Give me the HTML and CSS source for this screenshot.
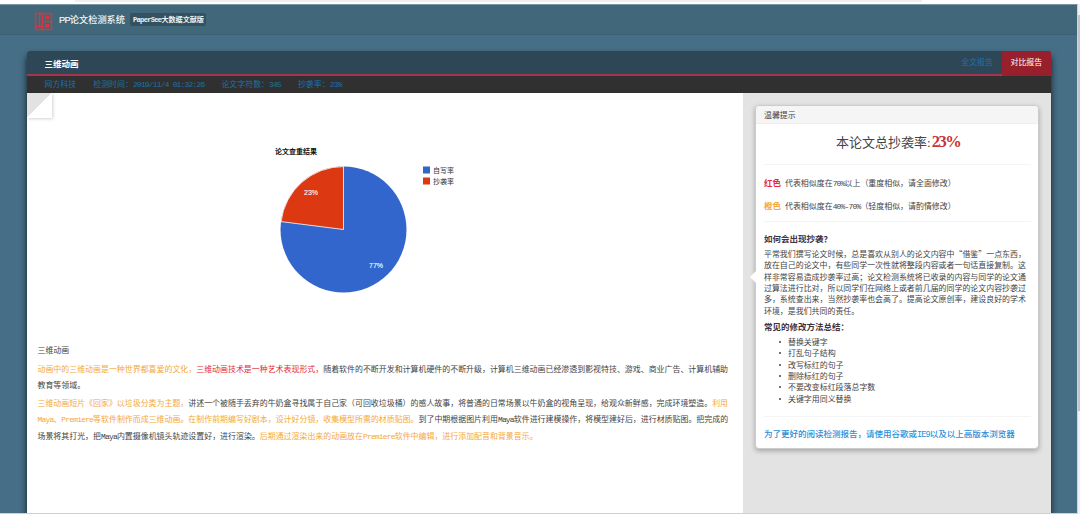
FILE: index.html
```
<!DOCTYPE html>
<html lang="zh-CN">
<head>
<meta charset="utf-8">
<title>PP论文检测系统</title>
<link rel="stylesheet" href="styles.css">
</head>
<body>
<div class="browser-strip"><div class="strip-fill"></div></div>
<div class="window">
<div class="viewport">
  <header class="site-header">
    <svg class="logo" viewBox="0 0 17 17"><path d="M.5 .5H16.500V16.500H.5ZM4.500 .5V13.500M.5 13.500H7.500M7.500 .5V16.500M7.500 8.500H16.500M11 3.500H13.500V5.500H11ZM11 11.500H13.500V13.500H11Z"/></svg>
    <span class="site-name"><span class="pp">PP</span>论文检测系统</span>
    <span class="edition"><span class="ln">PaperSee</span>大数据文献版</span>
  </header>
  <div class="report">
    <div class="report-head">
      <h1 class="report-title">三维动画</h1>
      <nav class="tabs"><a class="tab">全文报告</a><a class="tab active">对比报告</a></nav>
    </div>
    <div class="meta">
      <span>网方科技</span>
      <span>检测时间：<span class="ln">2019/11/4 01:32:26</span></span>
      <span>论文字符数：<span class="ln">345</span></span>
      <span>抄袭率：<span class="ln">23%</span></span>
    </div>
    <div class="columns">
      <main class="paper">
        <div class="fold"></div>
        <svg class="chart" viewBox="0 0 210 160">
          <text class="chart-title" x="15" y="14.300" textLength="42">论文查重结果</text>
          <circle cx="83.500" cy="89.500" r="63" fill="#3366cc"/>
          <path d="M83.500 89.500L21 81.600A63 63 0 0 1 83.500 26.500Z" fill="#dc3912" stroke="#fff" stroke-width=".8"/>
          <text class="slice" x="44" y="55.300" textLength="14">23%</text>
          <text class="slice" x="109" y="128.300" textLength="14">77%</text>
          <rect x="163" y="26.500" width="7" height="7" fill="#3366cc"/>
          <rect x="163" y="37.500" width="7" height="7" fill="#dc3912"/>
          <text class="legend" x="173" y="32.800" textLength="21">自写率</text>
          <text class="legend" x="173" y="43.800" textLength="21">抄袭率</text>
        </svg>
        <div class="article">
          <p>三维动画</p>
          <p><span class="orange">动画中的三维动画是一种世界都喜爱的文化，</span><span class="red">三维动画技术是一种艺术表现形式，</span>随着软件的不断开发和计算机硬件的不断升级，计算机三维动画已经渗透到影视特技、游戏、商业广告、计算机辅助<br>教育等领域。</p>
          <p><span class="orange">三维动画短片《回家》以垃圾分类为主题，</span>讲述一个被随手丢弃的牛奶盒寻找属于自己家（可回收垃圾桶）的感人故事，将普通的日常场景以牛奶盒的视角呈现，给观众新鲜感，完成环境塑造。<span class="orange">利用<br><span class="ln">Maya</span>、<span class="ln">Premiere</span>等软件制作而成三维动画。在制作前期编写好剧本，设计好分镜，收集模型所需的材质贴图。</span>到了中期根据图片利用<span class="ln">Maya</span>软件进行建模操作，将模型建好后，进行材质贴图。把完成的<br>场景将其打光，把<span class="ln">Maya</span>内置摄像机镜头轨迹设置好，进行渲染。<span class="orange">后期通过渲染出来的动画放在<span class="ln">Premiere</span>软件中编辑，进行添加配音和背景音乐。</span></p>
        </div>
      </main>
      <aside class="side">
        <section class="card">
          <div class="card-head">温馨提示</div>
          <div class="card-body">
            <div class="total">本论文总抄袭率:<strong>23%</strong></div>
            <div class="levels">
              <div class="level"><b class="red">红色</b><span>代表相似度在<span class="ln">70%</span>以上（重度相似，请全面修改）</span></div>
              <div class="level"><b class="orange">橙色</b><span>代表相似度在<span class="ln">40%-70%</span>（轻度相似，请酌情修改）</span></div>
            </div>
            <h2>如何会出现抄袭？</h2>
            <p class="explain">平常我们撰写论文时候，总是喜欢从别人的论文内容中“借鉴”一点东西，<br>放在自己的论文中，有些同学一次性就将整段内容或者一句话直接复制。这<br>样非常容易造成抄袭率过高；论文检测系统将已收录的内容与同学的论文通<br>过算法进行比对，所以同学们在网络上或者前几届的同学的论文内容抄袭过<br>多，系统查出来，当然抄袭率也会高了。提高论文原创率，建设良好的学术<br>环境，是我们共同的责任。</p>
            <h2 class="methods">常见的修改方法总结：</h2>
            <ul>
              <li>替换关键字</li><li>打乱句子结构</li><li>改写标红的句子</li><li>删除标红的句子</li><li>不要改变标红段落总字数</li><li>关键字用同义替换</li>
            </ul>
            <div class="browser-tip">为了更好的阅读检测报告，请使用谷歌或<span class="ln">IE9</span>以及以上高版本浏览器</div>
          </div>
        </section>
      </aside>
    </div>
  </div>
</div>
<div class="scrollbar"><div class="thumb"></div></div>
</div>
</body>
</html>
```

FILE: styles.css
```
* { box-sizing: border-box; }
body { margin: 0; height: 515px; overflow: hidden; background: #fff; color: #444; font: 7.94px/16px "Noto Sans CJK SC", sans-serif; text-spacing-trim: space-all; white-space: nowrap; }
h1, h2, p, ul { margin: 0; padding: 0; font-size: inherit; }
.ln { font-family: "Liberation Mono", monospace; letter-spacing: -0.1em; }
.red { color: #e5293b; }
.orange { color: #f5a93a; }
.browser-strip { height: 4px; padding-left: 75px; }
.strip-fill { width: 847px; height: 2px; background: #efefef; }
.window { display: flex; height: 510px; }
.viewport { height: 510px; width: 1078px; background: #466e86; border-top: 1px solid #7c98a5; border-right: 1px solid #cfd6da; border-bottom: 1px solid #d0d0d0; overflow: hidden; }
.scrollbar { width: 2px; padding-top: 11px; background: #f1f1f1; }
.thumb { height: 396px; background: #c4c4c4; }
.site-header { height: 30px; display: flex; align-items: center; padding-left: 35px; background: #41677a; border-bottom: 1px solid #3c6173; }
.logo { width: 17px; height: 17px; margin-top: 3px; fill: none; stroke: #d0393d; stroke-width: 1.4; overflow: visible; }
.site-name { margin-left: 7px; font-size: 9.2px; font-weight: 500; color: #f2f6f8; width: 66px; }
.pp { font-family: "Liberation Sans", sans-serif; letter-spacing: -.7px; -webkit-text-stroke: .2px #f2f6f8; }
.edition { margin-left: 5px; width: 76px; height: 13px; padding-left: 3px; line-height: 12px; border-radius: 2px; background: #34515f; color: #edf2f4; font-size: 7.1px; font-weight: 700; }
.report { width: 1024px; height: 480px; margin: 16px 0 0 27px; border-radius: 3px 3px 0 0; box-shadow: 0 5px 7px rgba(0,0,0,.75); }
.report-head { height: 25px; display: flex; justify-content: space-between; background: #2e4757; border-bottom: 2px solid #a7344f; border-radius: 3px 3px 0 0; }
.report-title { margin-left: 17.500px; color: #fff; font-size: 8.5px; line-height: 25px; }
.tabs { display: flex; line-height: 22px; }
.tab { color: #1c72aa; padding: 0 9px; }
.tab.active { color: #fff; width: 49px; padding-left: 8.500px; background: #97202c; border-radius: 0 3px 0 0; height: 25px; }
.meta { height: 17px; display: flex; gap: 17px; padding-left: 17.500px; line-height: 16px; background: #303030; color: #1b70a9; }
.columns { display: flex; height: 425px; }
.paper { width: 716px; background: #fff; }
.fold { width: 25px; height: 25px; background: linear-gradient(135deg, #e2e2e2 50%, #fff 50%); box-shadow: 1px 1px 3px rgba(0,0,0,.18); }
.chart { display: block; width: 210px; height: 160px; margin: 22px 0 0 233px; }
.chart-title { font-size: 7px; font-weight: 700; fill: #111; }
.slice { font: 7px "Liberation Sans", sans-serif; fill: #fff; stroke: #fff; stroke-width: .1; }
.legend { font-size: 7px; fill: #333; }
.article { padding: 42px 0 0 10.500px; }
.article p { margin-bottom: 2.700px; }
.side { width: 308px; background: #e3e3e3; padding: 12px 0 0 12px; }
.card { position: relative; width: 284px; height: 344px; background: #fff; border: 1px solid #ccc; border-radius: 4px; box-shadow: 0 2px 5px rgba(0,0,0,.28); }
.card::before { content: ""; position: absolute; left: -6px; top: 165px; border: 6px solid transparent; border-left: 0; border-right: 6px solid #fff; }
.card-head { height: 18px; line-height: 17px; padding-left: 8px; background: #f5f5f5; border-radius: 4px 4px 0 0; border-bottom: 1px solid #eee; }
.card-body { padding: 0 7px 0 8px; }
.total { height: 41px; line-height: 36px; border-bottom: 1px solid #f4f4f4; padding-left: 72px; font-family: "Liberation Serif", "Noto Sans CJK SC", serif; font-size: 13px; }
.total strong { margin-left: 1px; color: #c93434; font-size: 16.500px; font-weight: 700; letter-spacing: -1.4px; }
.levels { height: 57px; padding-top: 6px; border-bottom: 1px solid #f4f4f4; line-height: 23px; }
.level { display: flex; height: 23px; }
.level b { width: 21px; font-size: 8.500px; }
.card h2 { font-size: 8.500px; line-height: 12px; color: #3f3340; margin-top: 10px; }
.explain { line-height: 11.350px; margin-top: 4px; }
.card h2.methods { margin-top: 4px; }
.card ul { line-height: 11.350px; padding-left: 24px; margin-top: 4px; }
.card li { list-style: none; }
.card li::before { content: ""; display: inline-block; width: 2px; height: 2px; border-radius: 50%; background: #444; vertical-align: 2px; margin: 0 7px 0 -9px; }
.browser-tip { margin-top: 12px; border-top: 1px solid #f4f4f4; line-height: 16px; padding-top: 8px; color: #2b8ed8; font-size: 8.500px; font-weight: 500; }
```
